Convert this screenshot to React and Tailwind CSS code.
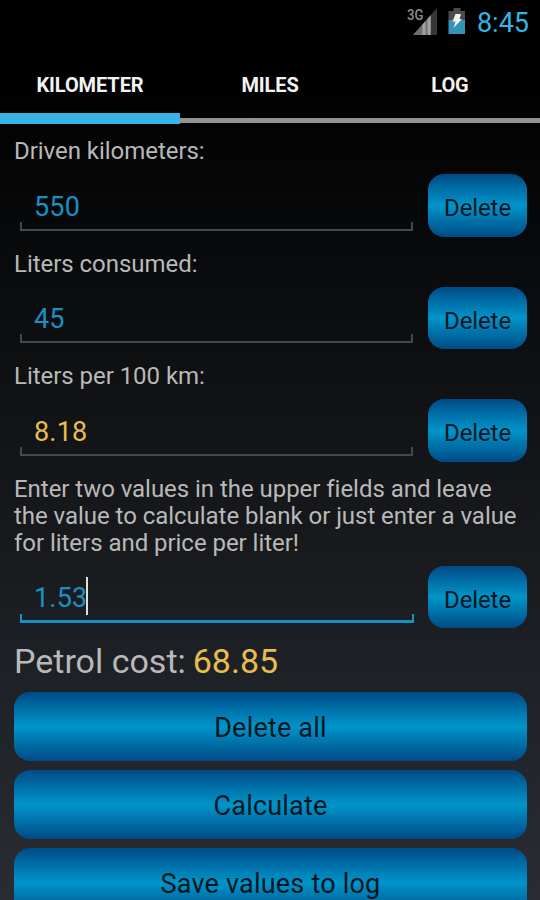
import { useState } from "react";

const TABS = ["KILOMETER", "MILES", "LOG"];

const ACTIONS = ["Delete all", "Calculate", "Save values to log"];

function StatusBar() {
  return (
    <div className="flex h-[45px] shrink-0 items-start justify-end pr-[11px]">
      <svg className="mt-[6px]" width="34" height="32" viewBox="0 0 34 32">
        <text
          x="0"
          y="14"
          fontFamily="Roboto, sans-serif"
          fontSize="14.500"
          fontWeight="500"
          textLength="16.500"
          lengthAdjust="spacingAndGlyphs"
          fill="#8d8d8d"
        >
          3G
        </text>
        <path d="M6 29 30 2v27z" fill="#373737" />
        <path d="M6 29 24 9v20z" fill="#707070" />
        <path d="M15.500 29V18.500l3-3.400V29zM20.500 29V13l3-3.400V29z" fill="#a2a2a2" />
      </svg>
      <svg className="ml-[7px] mt-[8px]" width="19" height="27" viewBox="0 0 19 27">
        <path d="M5.500 0h7v3h4.500v9H.500V3h5z" fill="#4b4b4b" />
        <path d="M.500 12H17v14H.500z" fill="#3593b8" />
        <path d="M7.500 6h5.500l-1.500 5H14L5.500 20l2-6.500h-3z" fill="#f1f1f1" />
      </svg>
      <span className="ml-[10px] mt-[8px] text-[27px] leading-[30px] text-[#33b5e5]">
        8:45
      </span>
    </div>
  );
}

function Tabs({ active, onChange }) {
  return (
    <div className="relative flex h-[79px] shrink-0">
      {TABS.map((t, i) => (
        <button
          key={t}
          type="button"
          onClick={() => onChange(i)}
          className="flex-1 text-[20px] font-bold tracking-[-0.1px] text-[#f3f3f3]"
        >
          {t}
        </button>
      ))}
      <div className="absolute inset-x-0 bottom-[1px] h-[5px] bg-[#929292]" />
      <div
        className="absolute bottom-0 h-[11px] w-1/3 bg-[#38b3e7]"
        style={{ left: `${(active * 100) / TABS.length}%` }}
      />
    </div>
  );
}

function Field({ value, calculated, focused }) {
  return (
    <div className="flex h-[62.500px] shrink-0 pl-[20px] pr-[13px]">
      <div className="relative flex-1">
        <div
          className={`flex h-full items-center pl-[14px] pt-[3px] text-[27px] tracking-[0.2px] ${
            calculated ? "text-[#e9bc50]" : "text-[#1a90c2]"
          }`}
        >
          <span>{value}</span>
          {focused && <span className="-ml-px -mt-[4px] h-[38px] w-[2px] bg-[#dedede]" />}
        </div>
        <div
          className={`absolute left-0 h-[9px] ${
            focused
              ? "bottom-[5px] right-0 border-x-2 border-b-[3px] border-[#1a90c2]"
              : "bottom-[6px] right-px border-x-2 border-b-2 border-[#45484a]"
          }`}
        />
      </div>
      <button
        type="button"
        className="ml-[14px] w-[99px] rounded-[16px] bg-linear-to-b/srgb from-[#004a85] via-[#0095ca] to-[#004a85] pt-[6px] text-[24px] tracking-[-0.1px] text-[#03151f]"
      >
        Delete
      </button>
    </div>
  );
}

function Label({ children }) {
  return (
    <div className="shrink-0 pb-[9px] pl-[14px] pr-2 pt-[14px] text-[24px] leading-[27px] tracking-[-0.040px] text-[#b9b9b9]">
      {children}
    </div>
  );
}

export default function App() {
  const [tab, setTab] = useState(0);

  return (
    <div className="flex h-[900px] w-[540px] flex-col overflow-hidden bg-linear-to-b/srgb from-black from-8% to-[#292d33] font-[Roboto,sans-serif]">
      <StatusBar />
      <Tabs active={tab} onChange={setTab} />

      <Label>Driven kilometers:</Label>
      <Field value="550" />
      <Label>Liters consumed:</Label>
      <Field value="45" />
      <Label>Liters per 100 km:</Label>
      <Field value="8.18" calculated />
      <Label>
        Enter two values in the upper fields and leave
        <br />
        the value to calculate blank or just enter a value
        <br />
        for liters and price per liter!
      </Label>
      <Field value="1.53" focused />

      {/* Result */}
      <div className="flex h-[64px] shrink-0 items-center gap-[7px] pl-[14px] pt-[2px] text-[34px]">
        <span className="text-[#b9b9b9]">Petrol cost:</span>
        <span className="text-[#e9bc50]">68.85</span>
      </div>

      <div className="flex flex-col gap-[9px] pl-[14px] pr-[13px]">
        {ACTIONS.map((a) => (
          <button
            key={a}
            type="button"
            className="h-[69px] shrink-0 rounded-[16px] bg-linear-to-b/srgb from-[#004a85] via-[#0095ca] to-[#004a85] pt-[4px] text-[27px] tracking-[0.2px] text-[#03151f]"
          >
            {a}
          </button>
        ))}
      </div>
    </div>
  );
}
